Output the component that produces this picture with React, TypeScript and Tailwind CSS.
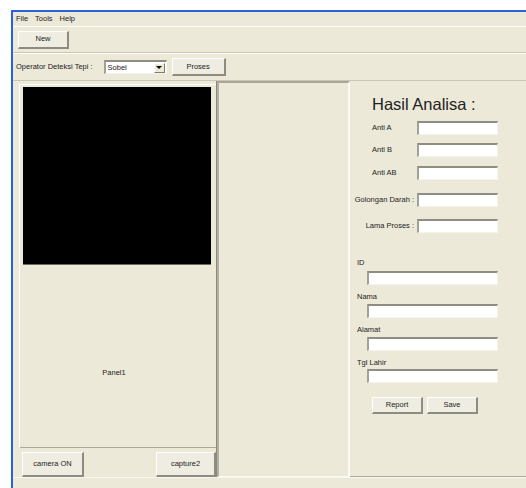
import React from "react";

type BtnProps = { label: string; className?: string };

// raised XP-style push button
function Button({ label, className = "" }: BtnProps) {
  return (
    <div
      className={`flex items-center justify-center bg-[#efede2] border-t border-l border-white border-r-2 border-b-2 border-r-[#8e8c80] border-b-[#8e8c80] text-[#222] ${className}`}
    >
      {label}
    </div>
  );
}

// sunken white text box
function TextBox({ className = "" }: { className?: string }) {
  return (
    <div
      className={`bg-white border-t-2 border-l-2 border-t-[#8f8d83] border-l-[#a3a197] border-r border-b border-r-[#f4f3ee] border-b-[#f4f3ee] ${className}`}
    />
  );
}

function FieldRow({
  label,
  mt,
  right,
}: {
  label: string;
  mt: string;
  right?: boolean;
}) {
  return (
    <div className={`flex h-[14px] items-center ${mt}`}>
      <div
        className={`w-[67px] shrink-0 ${right ? "text-right pr-[3px]" : "pl-[22px]"}`}
      >
        {label}
      </div>
      <TextBox className="w-[81px] h-[14px]" />
    </div>
  );
}

function Combo() {
  return (
    <div className="ml-[11px] w-[63px] h-[14px] bg-white border-t-2 border-l-2 border-t-[#8f8d83] border-l-[#a3a197] border-r border-b border-r-[#f4f3ee] border-b-[#f4f3ee] flex items-center">
      <span className="pl-[2px] flex-1">Sobel</span>
      <div className="w-[11px] h-[10px] mr-[1px] bg-[#ece9d8] border-t border-l border-white border-r border-b border-r-[#7d7b70] border-b-[#7d7b70] flex items-center justify-center">
        <div className="w-0 h-0 border-l-[3px] border-r-[3px] border-t-[3px] border-l-transparent border-r-transparent border-t-black" />
      </div>
    </div>
  );
}

export default function App() {
  return (
    <div className="w-[526px] h-[488px] bg-white pl-[11px] pt-[10px] font-['Liberation_Sans',Arial,sans-serif] text-[7.5px] leading-none text-[#1c1c1c] overflow-hidden">
      <div className="h-full border-t-2 border-l-2 border-[#2d62d6] bg-[#ece9d8] flex flex-col">
        {/* menu bar */}
        <div className="h-[14px] flex items-center gap-[7px] pl-[3px]">
          <span>File</span>
          <span>Tools</span>
          <span>Help</span>
        </div>

        {/* toolbar */}
        <div className="h-[27px] border-t border-white border-b border-b-[#c9c6b6] flex items-center pl-[5px]">
          <Button label="New" className="w-[51px] h-[18px]" />
        </div>

        {/* edge detection bar */}
        <div className="h-[28px] border-t border-white border-b border-b-[#c9c6b6] flex items-center pl-[3px]">
          <span className="shrink-0">Operator Deteksi Tepi :</span>
          <Combo />
          <Button label="Proses" className="ml-[5px] w-[54px] h-[18px]" />
        </div>

        {/* main area */}
        <div className="h-[396px] flex">
          {/* camera column */}
          <div className="w-[204px] shrink-0 border-r border-r-[#8a887c] flex flex-col">
            <div className="mt-[3px] ml-[6px] border-t border-l border-white">
              <div className="ml-[3px] mt-[2px] w-[188px] h-[178px] bg-black border-b border-b-[#6d6b62]" />
              <div className="h-[183px] border-b border-b-[#aca899] flex justify-center pt-[104px] pr-[8px]">
                Panel1
              </div>
            </div>
            <div className="flex justify-between pl-[9px] pt-[4px]">
              <Button label="camera ON" className="w-[62px] h-[25px] border-b-0" />
              <Button label="capture2" className="w-[60px] h-[25px] border-b-0" />
            </div>
          </div>

          {/* empty middle panel */}
          <div className="w-[133px] shrink-0 border-t-2 border-l-2 border-t-[#a9a697] border-l-[#b3b0a2] border-r-2 border-b border-r-[#fbfaf5] border-b-[#fbfaf5]" />

          {/* result form */}
          <div className="flex-1 flex flex-col border-b border-b-[#aca899]">
            <div className="mt-[13px] ml-[22px] h-[20px] leading-[20px] text-[16.5px] text-[#222]">
              Hasil Analisa :
            </div>
            <FieldRow label="Anti A" mt="mt-[7px]" />
            <FieldRow label="Anti B" mt="mt-[8px]" />
            <FieldRow label="Anti AB" mt="mt-[9px]" />
            <FieldRow label="Golongan Darah :" mt="mt-[13px]" right />
            <FieldRow label="Lama Proses :" mt="mt-[12px]" right />

            <div className="mt-[25px] h-[10px] flex items-center pl-[7px]">ID</div>
            <TextBox className="mt-[3px] ml-[17px] w-[131px] h-[14px]" />
            <div className="mt-[7px] h-[10px] flex items-center pl-[7px]">Nama</div>
            <TextBox className="mt-[2px] ml-[17px] w-[131px] h-[14px]" />
            <div className="mt-[7px] h-[10px] flex items-center pl-[7px]">Alamat</div>
            <TextBox className="mt-[2px] ml-[17px] w-[131px] h-[14px]" />
            <div className="mt-[7px] h-[10px] flex items-center pl-[7px]">Tgl Lahir</div>
            <TextBox className="mt-[1px] ml-[17px] w-[131px] h-[14px]" />

            <div className="mt-[14px] ml-[22px] flex gap-[4px]">
              <Button label="Report" className="w-[51px] h-[17px]" />
              <Button label="Save" className="w-[51px] h-[17px]" />
            </div>
          </div>
        </div>

        {/* status strip */}
        <div className="flex-1 border-t border-t-[#f7f6f0]" />
      </div>
    </div>
  );
}
